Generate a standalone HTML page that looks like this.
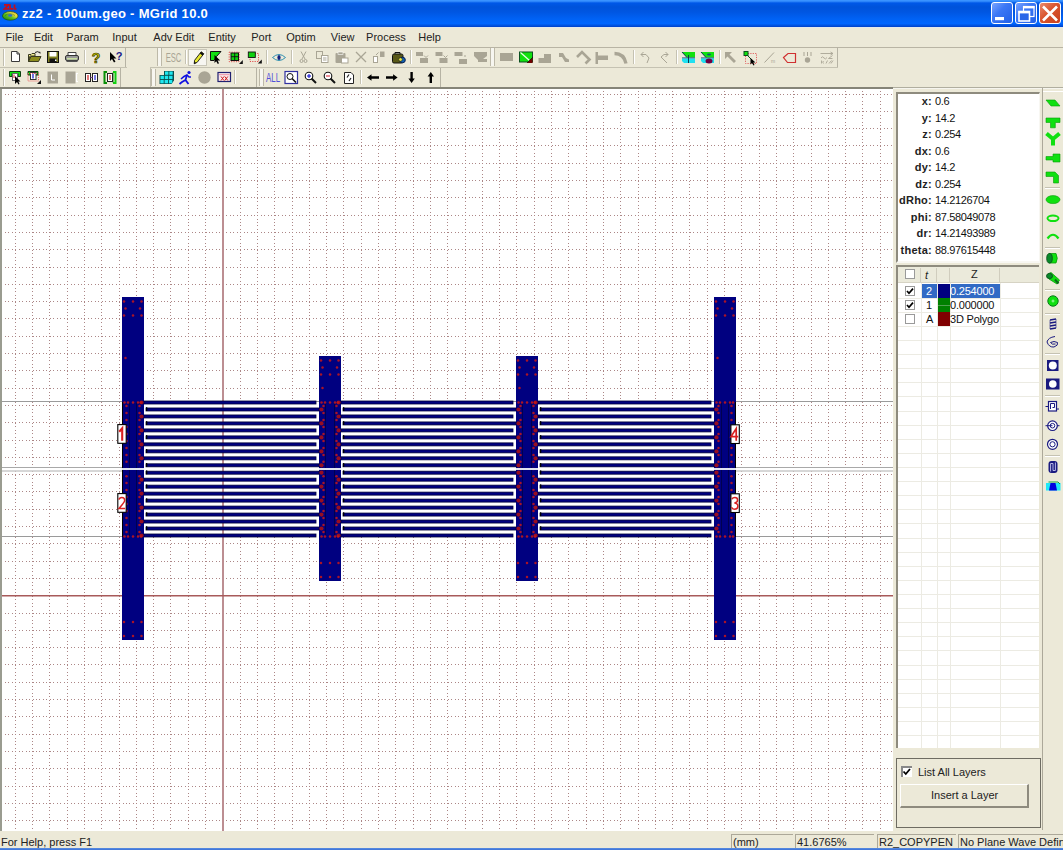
<!DOCTYPE html>
<html><head><meta charset="utf-8"><style>
html,body{margin:0;padding:0}
body{width:1063px;height:850px;overflow:hidden;position:relative;background:#ECE9D8;font-family:"Liberation Sans", sans-serif;font-size:11px;color:#222}
.a{position:absolute}
.t{position:absolute;white-space:nowrap;line-height:1}
</style></head><body>

<div class="a" style="left:0;top:0;width:1063px;height:27px;background:linear-gradient(to bottom,#3A93FF 0px,#3A93FF 1px,#0058E8 3px,#0053DA 7px,#0056E2 12px,#0062F5 19px,#0066FF 23.5px,#0058E8 25px,#0040C8 27px)"></div>
<div class="a" style="left:0;top:27px;width:1063px;height:1px;background:#E4E9EC"></div>
<div class="t" style="left:22px;top:6.7px;font-size:13px;font-weight:bold;color:#fff;letter-spacing:0.3px">zz2 - 100um.geo - MGrid 10.0</div>

<svg class="a" style="left:0;top:0" width="22" height="26" viewBox="0 0 22 26">
<defs><linearGradient id="lg1" x1="0" y1="1" x2="1" y2="0"><stop offset="0" stop-color="#0a7a10"/><stop offset="0.45" stop-color="#60c020"/><stop offset="0.7" stop-color="#e8e040"/><stop offset="1" stop-color="#e0a020"/></linearGradient></defs>
<path d="M4 4.8H8.5L4.5 8.8H8.8M10 4.5V8.8H13M14.5 4.5V8.8H16.5" stroke="#C01020" stroke-width="1.8" fill="none"/>
<ellipse cx="10.2" cy="15.9" rx="7.8" ry="4.3" fill="url(#lg1)" stroke="#104010" stroke-width="0.6"/>
<ellipse cx="10.2" cy="15.5" rx="2.2" ry="1.2" fill="#3070C8"/>
<path d="M5 15.5Q10 12 15 15.5" stroke="#204020" stroke-width="0.7" fill="none" stroke-opacity="0.6"/>
</svg>
<div class="a" style="left:991px;top:2px;width:19.5px;height:19.5px;border:1px solid #fff;border-radius:3px;background:linear-gradient(135deg,#7AA4FF 0%,#3C78F5 40%,#2160E8 100%)"></div>
<div class="a" style="left:1015px;top:2px;width:19.5px;height:19.5px;border:1px solid #fff;border-radius:3px;background:linear-gradient(135deg,#7AA4FF 0%,#3C78F5 40%,#2160E8 100%)"></div>
<div class="a" style="left:1039px;top:2px;width:19.5px;height:19.5px;border:1px solid #fff;border-radius:3px;background:linear-gradient(135deg,#E88A6E 0%,#D9552E 45%,#C8401E 100%)"></div>
<svg class="a" style="left:991px;top:2px" width="70" height="22">
<rect x="4" y="15" width="9" height="3.2" fill="#fff"/>
<rect x="32.5" y="4.5" width="10.5" height="10" fill="none" stroke="#fff" stroke-width="1.2"/>
<rect x="32" y="4" width="11.5" height="2.4" fill="#fff"/>
<rect x="28" y="9.5" width="10.5" height="9.5" fill="#2a66e8" stroke="#fff" stroke-width="1.6"/>
<rect x="27.5" y="9" width="11.5" height="2.4" fill="#fff"/>
<path d="M52 4.5L66 18.5M66 4.5L52 18.5" stroke="#fff" stroke-width="2.6"/>
</svg>
<div class="t" style="left:5.6px;top:32px">File</div>
<div class="t" style="left:33.9px;top:32px">Edit</div>
<div class="t" style="left:66.3px;top:32px">Param</div>
<div class="t" style="left:112.3px;top:32px">Input</div>
<div class="t" style="left:153.3px;top:32px">Adv Edit</div>
<div class="t" style="left:208.3px;top:32px">Entity</div>
<div class="t" style="left:251.2px;top:32px">Port</div>
<div class="t" style="left:286.3px;top:32px">Optim</div>
<div class="t" style="left:330.8px;top:32px">View</div>
<div class="t" style="left:366.1px;top:32px">Process</div>
<div class="t" style="left:418.3px;top:32px">Help</div>
<div class="a" style="left:0;top:47px;width:1063px;height:1px;background:#B8B4A4"></div>
<div class="a" style="left:0;top:67px;width:127px;height:1px;background:#C5C2B2"></div>
<div class="a" style="left:150px;top:67px;width:688px;height:1px;background:#C5C2B2"></div>
<div class="a" style="left:893px;top:87px;width:170px;height:1px;background:#B0AE9F"></div>
<div class="a" style="left:893px;top:88px;width:170px;height:1px;background:#F6F5EE"></div>
<svg class="a" style="left:0;top:46px" width="1063" height="42" viewBox="0 46 1063 42">
<rect x="3" y="49" width="1" height="17" fill="#C0BDAE"/><rect x="4" y="49" width="1" height="17" fill="#fff"/>
<rect x="84" y="50" width="1" height="14" fill="#C5C2B2"/><rect x="85" y="50" width="1" height="14" fill="#fff"/>
<rect x="125" y="47" width="1" height="20" fill="#B6B3A4"/>
<rect x="3" y="69" width="1" height="17" fill="#C0BDAE"/><rect x="4" y="69" width="1" height="17" fill="#fff"/>
<rect x="120" y="68" width="1" height="19" fill="#B6B3A4"/>
<rect x="157" y="48" width="1" height="18" fill="#BDB9A8"/><rect x="158" y="48" width="3" height="18" fill="#F7F6F0"/><rect x="161" y="48" width="1" height="18" fill="#BDB9A8"/>
<rect x="185" y="50" width="1" height="14" fill="#C5C2B2"/><rect x="186" y="50" width="1" height="14" fill="#fff"/>
<rect x="266" y="50" width="1" height="14" fill="#C5C2B2"/><rect x="267" y="50" width="1" height="14" fill="#fff"/>
<rect x="291" y="50" width="1" height="14" fill="#C5C2B2"/><rect x="292" y="50" width="1" height="14" fill="#fff"/>
<rect x="410" y="50" width="1" height="14" fill="#C5C2B2"/><rect x="411" y="50" width="1" height="14" fill="#fff"/>
<rect x="490" y="48" width="1" height="18" fill="#BDB9A8"/><rect x="491" y="48" width="3" height="18" fill="#F7F6F0"/><rect x="494" y="48" width="1" height="18" fill="#BDB9A8"/>
<rect x="633" y="50" width="1" height="14" fill="#C5C2B2"/><rect x="634" y="50" width="1" height="14" fill="#fff"/>
<rect x="676" y="50" width="1" height="14" fill="#C5C2B2"/><rect x="677" y="50" width="1" height="14" fill="#fff"/>
<rect x="719" y="50" width="1" height="14" fill="#C5C2B2"/><rect x="720" y="50" width="1" height="14" fill="#fff"/>
<rect x="837" y="47" width="1" height="20" fill="#B6B3A4"/>
<rect x="150" y="68" width="1" height="19" fill="#C0BDAE"/>
<rect x="151" y="69" width="1" height="17" fill="#BDB9A8"/><rect x="152" y="69" width="3" height="17" fill="#F7F6F0"/><rect x="155" y="69" width="1" height="17" fill="#BDB9A8"/>
<rect x="234" y="70" width="1" height="14" fill="#C5C2B2"/><rect x="235" y="70" width="1" height="14" fill="#fff"/>
<rect x="256" y="68" width="1" height="19" fill="#B6B3A4"/>
<rect x="259" y="69" width="1" height="17" fill="#BDB9A8"/><rect x="260" y="69" width="3" height="17" fill="#F7F6F0"/><rect x="263" y="69" width="1" height="17" fill="#BDB9A8"/>
<rect x="360" y="70" width="1" height="14" fill="#C5C2B2"/><rect x="361" y="70" width="1" height="14" fill="#fff"/>
<rect x="440" y="68" width="1" height="19" fill="#B6B3A4"/>
<path d="M11.5 51.5H17L19.5 54V61.5H11.5Z" fill="#fff" stroke="#3a3a3a"/><path d="M17 51.5V54H19.5" fill="none" stroke="#3a3a3a"/>
<path d="M28.5 54.5H31L32 53.5H35V56H30L28.5 61.5Z" fill="#F2EE90" stroke="#3a3a20"/>
<path d="M28.5 61.5L31 56.5H41L38.5 61.5Z" fill="#8C8C1C" stroke="#3a3a20"/>
<path d="M35 52.5Q38 50.5 40 53" fill="none" stroke="#222" stroke-width="1"/><path d="M39 52L41 54L40 51.5Z" fill="#222"/>
<rect x="47.5" y="51.5" width="11" height="11" fill="#808020" stroke="#111"/><rect x="49.5" y="52" width="7" height="4.5" fill="#fff"/><rect x="49.5" y="58.5" width="7" height="4" fill="#111"/><rect x="55" y="59.5" width="1.5" height="1.5" fill="#fff"/>
<path d="M68 52.5H76V55.5H68Z" fill="#fff" stroke="#444"/><rect x="65.5" y="55.5" width="13" height="5" rx="1.5" fill="#9a9a9a" stroke="#333"/><rect x="67" y="58" width="10" height="1.5" fill="#c8e0a0"/><rect x="66.5" y="60.5" width="11" height="1.5" fill="#555"/>
<text x="96" y="62.5" font-family="Liberation Sans" font-weight="bold" font-size="14" fill="#C8C800" stroke="#303000" stroke-width="0.7" text-anchor="middle">?</text>
<path d="M110 52V61L112 59L114 62.5L115.5 61.5L113.5 58.5H116.5Z" fill="#000"/>
<text x="119" y="60" font-family="Liberation Sans" font-weight="bold" font-size="11" fill="#1a1a8a" text-anchor="middle">?</text>
<text x="0" y="61.8" font-family="Liberation Sans" font-size="12.3" fill="#A9A595" text-anchor="middle" transform="translate(173.5 0) scale(0.62 1)">ESC</text>
<rect x="188.5" y="49.5" width="18" height="16" fill="#F7F6F1" stroke="#C9C6B8"/>
<path d="M194.2 63.8L194.6 60.3L201.2 51.8L203.8 53.8L197.2 62.3Z" fill="#E8E830" stroke="#111" stroke-width="0.9"/><path d="M201.2 51.8L203.8 53.8L202.4 55.6L199.8 53.6Z" fill="#111"/><path d="M194.2 63.8L194.5 61.6L196.2 62.9Z" fill="#111"/>
<path d="M210.5 51.5H221L216.5 56.5L214 60.5H210.5Z" fill="#10E010" stroke="#111"/>
<path d="M214.5 55V63L216.2 61.3L217.8 64L219 63.3L217.6 60.6H220.2Z" fill="#000"/>
<rect x="229.2" y="52.2" width="10" height="9.5" fill="none" stroke="#E04040" stroke-dasharray="1.2 1.2" stroke-width="0.9"/>
<rect x="231" y="53" width="7.5" height="7.5" fill="#10D010" stroke="#111" stroke-width="1"/><path d="M234.7 53V60.5M231 56.7H238.5" stroke="#111" stroke-width="0.9"/>
<path d="M239 64H242.8V60Z" fill="#111"/>
<rect x="250" y="53.5" width="8.5" height="8" fill="none" stroke="#E04040" stroke-dasharray="1.2 1.2" stroke-width="0.9"/>
<rect x="248.3" y="52" width="7" height="5.5" fill="#10D010" stroke="#111" stroke-width="0.9"/>
<path d="M257.8 63.6H261.8V59.6Z" fill="#111"/>
<path d="M272.5 57.5Q279 51.5 285.5 57.5Q279 63.5 272.5 57.5Z" fill="none" stroke="#3090B0" stroke-width="1"/><ellipse cx="279" cy="57.5" rx="1.6" ry="2.6" fill="#102080"/>
<path d="M301 51.5L305 59M306 51.5L302 59" stroke="#A9A595" stroke-width="1" fill="none"/><circle cx="301.5" cy="61" r="1.5" fill="none" stroke="#A9A595"/><circle cx="305.5" cy="61" r="1.5" fill="none" stroke="#A9A595"/>
<rect x="316.5" y="51.5" width="6" height="7" fill="none" stroke="#A9A595"/><rect x="321.5" y="55.5" width="6.5" height="7" fill="#FFFFFF" stroke="#A9A595"/><path d="M323 58H326.5M323 60H326.5" stroke="#A9A595"/>
<rect x="335.5" y="53" width="10" height="10" rx="1" fill="#A9A595"/><rect x="338" y="52" width="5" height="2.5" fill="#A9A595" stroke="#fff" stroke-width="0.6"/><rect x="341.5" y="58" width="6.5" height="5" fill="#fff" stroke="#A9A595"/>
<path d="M356 52L366 62M366 52L356 62" stroke="#A9A595" stroke-width="1.3"/>
<rect x="373.5" y="56.5" width="4" height="6" fill="#fff" stroke="#A9A595"/><rect x="380" y="51.5" width="4.5" height="5.5" fill="#A9A595"/><path d="M376 55L378.5 52.5" stroke="#A9A595"/>
<rect x="392.5" y="54" width="10.5" height="9" rx="1.5" fill="#585818" stroke="#111"/><path d="M395 54V52.5H400V54" fill="none" stroke="#111"/><circle cx="402.5" cy="60" r="2.8" fill="#1060B0" stroke="#0a2050"/><circle cx="400.5" cy="59.5" r="1.8" fill="#E8E840" stroke="#222" stroke-width="0.6"/>
<rect x="416" y="52" width="7" height="4" fill="#A9A595"/><rect x="420" y="58" width="8" height="5" fill="#A9A595"/><path d="M424 55.5L426 57.5L428 55.5" stroke="#A9A595" fill="none"/>
<rect x="435.5" y="52" width="7" height="4" fill="#A9A595"/><rect x="439.5" y="58" width="8" height="5" fill="#A9A595"/><path d="M443.5 55.5L445.5 57.5L447.5 55.5" stroke="#A9A595" fill="none"/>
<rect x="454.5" y="52" width="8" height="4" fill="#A9A595"/><rect x="459" y="59" width="8" height="5" fill="#A9A595"/><path d="M465 55V57" stroke="#A9A595"/>
<path d="M474 52H487V56L483 59H487V62H478V60L474 56Z" fill="#A9A595"/>
<rect x="500" y="53" width="13" height="8" fill="#A9A595"/>
<rect x="519.5" y="52" width="13" height="10" fill="#10E010" stroke="#0a5020"/><path d="M520.5 52.5L530 61" stroke="#E8FFE8" stroke-width="1.2"/><path d="M528 62L532.5 57.5V63H527Z" fill="#700000"/><path d="M527 63L533 57" stroke="#111" stroke-width="0.8"/>
<path d="M538.5 58H544V54H551V63H538.5Z" fill="#A9A595"/>
<path d="M559 53H563L566 58L569 59.5V62H565L562 57H559Z" fill="#A9A595"/>
<path d="M577 57L582 52L589.5 59.5L585.5 63.5" stroke="#A9A595" stroke-width="2.6" fill="none"/>
<rect x="595.5" y="52" width="2.5" height="12" fill="#A9A595"/><rect x="598" y="55.5" width="10" height="4.5" fill="#A9A595"/>
<path d="M614.5 53.5Q624 53.5 626 63.5" stroke="#A9A595" stroke-width="3.3" fill="none"/>
<path d="M647 63L649 58L646 54.5H641" stroke="#A9A595" fill="none"/><path d="M641 54.5L643.5 52M641 54.5L643.5 57" stroke="#A9A595" fill="none"/>
<path d="M667 63L661 57L664 54.5H668" stroke="#A9A595" fill="none"/><path d="M668 54.5L665.5 52M668 54.5L665.5 57" stroke="#A9A595" fill="none"/>
<path d="M682 52H695V57.5H687Z" fill="#10E010"/><path d="M682 52L687 57.5" stroke="#0a3a50"/><rect x="682" y="57.5" width="13" height="1" fill="#0a3a70"/><path d="M682 58.5H695V63H684L682 61Z" fill="#20E0F0"/>
<path d="M701 52H714V57.5H706Z" fill="#10E010"/><path d="M701 52L706 57.5" stroke="#0a3a50"/><rect x="701" y="57.5" width="13" height="1" fill="#0a3a70"/><path d="M701 58.5H714V63H703L701 61Z" fill="#20E0F0"/>
<rect x="688" y="55" width="1" height="8" fill="#0a3a50"/>
<ellipse cx="709" cy="61" rx="3.5" ry="2.5" fill="#700040"/><ellipse cx="709" cy="54.5" rx="2" ry="1" fill="#0a5a70"/>
<path d="M725 52H732L729.5 54.5L736 61L734 63L727.5 56.5L725 59Z" fill="#A9A595"/>
<rect x="745.5" y="53.5" width="11" height="10" fill="none" stroke="#E06060" stroke-dasharray="1.2 1.2"/><rect x="744" y="51.5" width="4" height="4" fill="#10E010" stroke="#0a5020"/><path d="M747 55L752 60" stroke="#0a5020"/><path d="M750.5 58V64.5L752 63L753.5 65.5L754.5 65L753.3 62.5H755.5Z" fill="#000"/>
<path d="M764.5 62.5L774 52.5" stroke="#A9A595" fill="none"/><text x="771" y="63" font-family="Liberation Sans" font-size="5" fill="#A9A595">m</text>
<path d="M783.5 57.5L788 53.5H795.5V62.5H787.5Z" fill="none" stroke="#D03030" stroke-width="1.2"/>
<path d="M804 52V56M807.5 52V56M811 52V56" stroke="#A9A595"/><circle cx="807.5" cy="60" r="2.7" fill="#A9A595"/>
<path d="M820.5 53.5H833M830.5 52L833 53.5L830.5 55M821 58Q822.5 55.5 824 58Q825.5 60 827 57.5M828.5 58.5L832.5 55.5M828.5 58.5H832.5M821.5 63.5V60.5M823.5 63.5Q822 62 823.5 61M826 63.5L827.5 60.5M829 63.5L831.5 60.5M831 63.5L833 60.5" stroke="#A9A595" stroke-width="0.9" fill="none"/>
<path d="M9.5 76.5V71.5H20.5V76.5H18V73.5H12V76.5Z" fill="#10E010" stroke="#0a4010"/><rect x="12.5" y="73.5" width="5" height="7" fill="#fff" stroke="#666"/><path d="M14 74.5V78" stroke="#D02020"/>
<path d="M15 76V84L17 82L18.5 84.5L19.5 84L18.3 81.5H20.5Z" fill="#000"/>
<path d="M28 75V71.5H38V75Z" fill="#10C010" stroke="#0a4010"/><rect x="30.5" y="72.5" width="5.5" height="7" fill="#fff" stroke="#333"/><path d="M33 73.5V78.5" stroke="#2020D0" stroke-width="1.3"/><rect x="28" y="73.5" width="10.5" height="7.5" fill="none" stroke="#F06060" stroke-dasharray="1 1"/><path d="M37 84H41V80Z" fill="#111"/>
<rect x="47.5" y="71.5" width="10.5" height="12" fill="#A9A595"/><path d="M51.5 74.5V80H55" stroke="#fff" fill="none"/>
<rect x="65.5" y="71.5" width="10" height="12" fill="#A9A595"/><path d="M78 73.5H76.5V81.5H78" stroke="#fff" fill="none" stroke-width="1.2"/>
<rect x="85.5" y="73.5" width="5" height="8" fill="#fff" stroke="#222"/><rect x="92.5" y="73.5" width="5" height="8" fill="#fff" stroke="#222"/><path d="M88 75V80" stroke="#D02020" stroke-width="1.2"/><path d="M95 75V80" stroke="#2020D0" stroke-width="1.2"/><path d="M90.5 77.5H92.5" stroke="#8040A0"/>
<path d="M107 72H104.5V83H107" stroke="#089008" stroke-width="2" fill="none"/><path d="M113 72H115.5V83H113" stroke="#10D010" stroke-width="2" fill="none"/><path d="M113 72.5V82.5" stroke="#089008"/><rect x="107.5" y="73.5" width="5" height="8" fill="#fff" stroke="#222"/><path d="M110 75V80" stroke="#D02020" stroke-width="1.2"/>
<path d="M164 71H174V80.5L171.5 84H159.5V75H164Z" fill="#0A5050"/>
<rect x="165" y="71.5" width="3.4" height="3.3" fill="#20E8F0"/>
<rect x="169.3" y="71.5" width="3.4" height="3.3" fill="#20E8F0"/>
<rect x="160.5" y="75.8" width="3.4" height="3.3" fill="#20E8F0"/>
<rect x="164.8" y="75.8" width="3.4" height="3.3" fill="#20E8F0"/>
<rect x="169.1" y="75.8" width="3.4" height="3.3" fill="#20E8F0"/>
<rect x="160.3" y="80" width="3.4" height="3.3" fill="#20E8F0"/>
<rect x="164.6" y="80" width="3.4" height="3.3" fill="#20E8F0"/>
<rect x="168.9" y="80" width="3.4" height="3.3" fill="#20E8F0"/>
<circle cx="189" cy="72.5" r="1.6" fill="#1010E0"/><path d="M181 79L184 76.5L187 75L189 77L191 77" stroke="#1010E0" stroke-width="1.6" fill="none"/><path d="M187 75L185.5 80L188.5 84M185.5 80L182 82L179.5 84" stroke="#1010E0" stroke-width="1.8" fill="none"/>
<circle cx="204.5" cy="77.5" r="6.2" fill="#A9A595"/>
<rect x="218" y="72.5" width="12.5" height="9" fill="#F8E8EC" stroke="#202070" stroke-width="1.2"/><rect x="219" y="74" width="10.5" height="1.2" fill="#F0A0B0"/><path d="M221 76.5L224 80.5M224 76.5L221 80.5M224.8 76.5L227.8 80.5M227.8 76.5L224.8 80.5" stroke="#D02020" stroke-width="1"/>
<text x="0" y="81.8" font-family="Liberation Sans" font-size="12" fill="#5050D8" transform="translate(266 0) scale(0.66 1)">ALL</text>
<rect x="285" y="71.5" width="12.5" height="12" fill="#fff" stroke="#3030A0" stroke-width="1.2"/><circle cx="290" cy="76.5" r="3" fill="#fff" stroke="#111"/><path d="M292 78.5L296 82.5" stroke="#111" stroke-width="1.6"/>
<circle cx="309.0" cy="76" r="3.8" fill="#fff" stroke="#111" stroke-width="1.1"/><path d="M311.5 78.5L316.0 83" stroke="#111" stroke-width="2"/><path d="M307.0 76H311.0" stroke="#2020D0" stroke-width="1.2"/>
<path d="M309.0 74V78" stroke="#2020D0" stroke-width="1.2"/>
<circle cx="328.0" cy="76" r="3.8" fill="#fff" stroke="#111" stroke-width="1.1"/><path d="M330.5 78.5L335.0 83" stroke="#111" stroke-width="2"/><path d="M326.0 76H330.0" stroke="#E04050" stroke-width="1.2"/>
<path d="M344.5 72.5H351L353.5 75V83.5H344.5Z" fill="#fff" stroke="#222"/><path d="M347 77.5L349 74.5M349 81L351 78" stroke="#222" stroke-width="1.2"/>
<path d="M367 77.5L371.5 74.3V76.3H379V78.7H371.5V80.7Z" fill="#000"/>
<path d="M397.6 77.5L393.1 74.3V76.3H386V78.7H393.1V80.7Z" fill="#000"/>
<path d="M411.6 83L408.4 78.5H410.4V72H412.8V78.5H414.8Z" fill="#000"/>
<path d="M430.8 72L427.6 76.5H429.6V83H432V76.5H434Z" fill="#000"/>
</svg>
<svg style="position:absolute;left:0px;top:88px" width="893" height="743" viewBox="0 88 893 743">
<rect x="0" y="88" width="893" height="743" fill="#fff"/>
<path d="M15.25 87.08V831M32.55 87.08V831M49.85 87.08V831M67.15 87.08V831M84.45 87.08V831M101.75 87.08V831M119.05 87.08V831M136.35 87.08V831M153.65 87.08V831M170.95 87.08V831M188.25 87.08V831M205.55 87.08V831M222.85 87.08V831M240.15 87.08V831M257.45 87.08V831M274.75 87.08V831M292.05 87.08V831M309.35 87.08V831M326.65 87.08V831M343.95 87.08V831M361.25 87.08V831M378.55 87.08V831M395.85 87.08V831M413.15 87.08V831M430.45 87.08V831M447.75 87.08V831M465.05 87.08V831M482.35 87.08V831M499.65 87.08V831M516.95 87.08V831M534.25 87.08V831M551.55 87.08V831M568.85 87.08V831M586.15 87.08V831M603.45 87.08V831M620.75 87.08V831M638.05 87.08V831M655.35 87.08V831M672.65 87.08V831M689.95 87.08V831M707.25 87.08V831M724.55 87.08V831M741.85 87.08V831M759.15 87.08V831M776.45 87.08V831M793.75 87.08V831M811.05 87.08V831M828.35 87.08V831M845.65 87.08V831M862.95 87.08V831M880.25 87.08V831" stroke="#AC8686" stroke-width="1" stroke-dasharray="1 2.460" fill="none" shape-rendering="crispEdges"/>
<path d="M1.41 94.00H893M1.41 111.30H893M1.41 128.60H893M1.41 145.90H893M1.41 163.20H893M1.41 180.50H893M1.41 197.80H893M1.41 215.10H893M1.41 232.40H893M1.41 249.70H893M1.41 267.00H893M1.41 284.30H893M1.41 301.60H893M1.41 318.90H893M1.41 336.20H893M1.41 353.50H893M1.41 370.80H893M1.41 388.10H893M1.41 405.40H893M1.41 422.70H893M1.41 440.00H893M1.41 457.30H893M1.41 474.60H893M1.41 491.90H893M1.41 509.20H893M1.41 526.50H893M1.41 543.80H893M1.41 561.10H893M1.41 578.40H893M1.41 595.70H893M1.41 613.00H893M1.41 630.30H893M1.41 647.60H893M1.41 664.90H893M1.41 682.20H893M1.41 699.50H893M1.41 716.80H893M1.41 734.10H893M1.41 751.40H893M1.41 768.70H893M1.41 786.00H893M1.41 803.30H893M1.41 820.60H893" stroke="#AC8686" stroke-width="1" stroke-dasharray="1 2.460" fill="none" shape-rendering="crispEdges"/>
</svg>
<svg style="position:absolute;left:0;top:88px" width="893" height="743" viewBox="0 88 893 743">
<rect x="0" y="401" width="893" height="1" fill="#9a9a9a"/>
<rect x="0" y="536" width="893" height="1" fill="#9a9a9a"/>
<rect x="144" y="402" width="570" height="135" fill="#fff"/>
<rect x="222" y="88" width="2" height="743" fill="#BC8E92"/>
<rect x="0" y="595" width="893" height="1.5" fill="#A85A5A"/>
<rect x="122" y="297" width="22" height="343" fill="#000080"/>
<rect x="319" y="356" width="22" height="225" fill="#000080"/>
<rect x="516" y="356" width="22" height="225" fill="#000080"/>
<rect x="714" y="297" width="22" height="343" fill="#000080"/>
<rect x="122" y="402" width="1" height="135" fill="#000"/>
<rect x="129" y="402" width="1" height="135" fill="#000050"/>
<rect x="136" y="402" width="1" height="135" fill="#000050"/>
<rect x="735" y="402" width="1" height="135" fill="#000"/>
<rect x="728" y="402" width="1" height="135" fill="#000050"/>
<rect x="721" y="402" width="1" height="135" fill="#000050"/>
<rect x="325" y="402" width="1" height="135" fill="#000050"/>
<rect x="334" y="402" width="1" height="135" fill="#000050"/>
<rect x="522" y="402" width="1" height="135" fill="#000050"/>
<rect x="531" y="402" width="1" height="135" fill="#000050"/>
<rect x="144" y="401.00" width="172" height="3.0" fill="#000080" stroke="#000038" stroke-width="0.8"/>
<rect x="341" y="401.00" width="172" height="3.0" fill="#000080" stroke="#000038" stroke-width="0.8"/>
<rect x="538" y="401.00" width="173" height="3.0" fill="#000080" stroke="#000038" stroke-width="0.8"/>
<rect x="146" y="407.98" width="173" height="3.0" fill="#000080" stroke="#000038" stroke-width="0.8"/>
<rect x="146" y="407.18" width="1.3" height="3.8" fill="#000"/>
<rect x="343" y="407.98" width="173" height="3.0" fill="#000080" stroke="#000038" stroke-width="0.8"/>
<rect x="343" y="407.18" width="1.3" height="3.8" fill="#000"/>
<rect x="540" y="407.98" width="174" height="3.0" fill="#000080" stroke="#000038" stroke-width="0.8"/>
<rect x="540" y="407.18" width="1.3" height="3.8" fill="#000"/>
<rect x="144" y="414.96" width="172" height="3.0" fill="#000080" stroke="#000038" stroke-width="0.8"/>
<rect x="341" y="414.96" width="172" height="3.0" fill="#000080" stroke="#000038" stroke-width="0.8"/>
<rect x="538" y="414.96" width="173" height="3.0" fill="#000080" stroke="#000038" stroke-width="0.8"/>
<rect x="146" y="421.94" width="173" height="3.0" fill="#000080" stroke="#000038" stroke-width="0.8"/>
<rect x="146" y="421.14" width="1.3" height="3.8" fill="#000"/>
<rect x="343" y="421.94" width="173" height="3.0" fill="#000080" stroke="#000038" stroke-width="0.8"/>
<rect x="343" y="421.14" width="1.3" height="3.8" fill="#000"/>
<rect x="540" y="421.94" width="174" height="3.0" fill="#000080" stroke="#000038" stroke-width="0.8"/>
<rect x="540" y="421.14" width="1.3" height="3.8" fill="#000"/>
<rect x="144" y="428.92" width="172" height="3.0" fill="#000080" stroke="#000038" stroke-width="0.8"/>
<rect x="341" y="428.92" width="172" height="3.0" fill="#000080" stroke="#000038" stroke-width="0.8"/>
<rect x="538" y="428.92" width="173" height="3.0" fill="#000080" stroke="#000038" stroke-width="0.8"/>
<rect x="146" y="435.90" width="173" height="3.0" fill="#000080" stroke="#000038" stroke-width="0.8"/>
<rect x="146" y="435.10" width="1.3" height="3.8" fill="#000"/>
<rect x="343" y="435.90" width="173" height="3.0" fill="#000080" stroke="#000038" stroke-width="0.8"/>
<rect x="343" y="435.10" width="1.3" height="3.8" fill="#000"/>
<rect x="540" y="435.90" width="174" height="3.0" fill="#000080" stroke="#000038" stroke-width="0.8"/>
<rect x="540" y="435.10" width="1.3" height="3.8" fill="#000"/>
<rect x="144" y="442.88" width="172" height="3.0" fill="#000080" stroke="#000038" stroke-width="0.8"/>
<rect x="341" y="442.88" width="172" height="3.0" fill="#000080" stroke="#000038" stroke-width="0.8"/>
<rect x="538" y="442.88" width="173" height="3.0" fill="#000080" stroke="#000038" stroke-width="0.8"/>
<rect x="146" y="449.86" width="173" height="3.0" fill="#000080" stroke="#000038" stroke-width="0.8"/>
<rect x="146" y="449.06" width="1.3" height="3.8" fill="#000"/>
<rect x="343" y="449.86" width="173" height="3.0" fill="#000080" stroke="#000038" stroke-width="0.8"/>
<rect x="343" y="449.06" width="1.3" height="3.8" fill="#000"/>
<rect x="540" y="449.86" width="174" height="3.0" fill="#000080" stroke="#000038" stroke-width="0.8"/>
<rect x="540" y="449.06" width="1.3" height="3.8" fill="#000"/>
<rect x="144" y="456.84" width="172" height="3.0" fill="#000080" stroke="#000038" stroke-width="0.8"/>
<rect x="341" y="456.84" width="172" height="3.0" fill="#000080" stroke="#000038" stroke-width="0.8"/>
<rect x="538" y="456.84" width="173" height="3.0" fill="#000080" stroke="#000038" stroke-width="0.8"/>
<rect x="146" y="463.82" width="173" height="3.0" fill="#000080" stroke="#000038" stroke-width="0.8"/>
<rect x="146" y="463.02" width="1.3" height="3.8" fill="#000"/>
<rect x="343" y="463.82" width="173" height="3.0" fill="#000080" stroke="#000038" stroke-width="0.8"/>
<rect x="343" y="463.02" width="1.3" height="3.8" fill="#000"/>
<rect x="540" y="463.82" width="174" height="3.0" fill="#000080" stroke="#000038" stroke-width="0.8"/>
<rect x="540" y="463.02" width="1.3" height="3.8" fill="#000"/>
<rect x="146" y="471.18" width="173" height="3.0" fill="#000080" stroke="#000038" stroke-width="0.8"/>
<rect x="146" y="470.38" width="1.3" height="3.8" fill="#000"/>
<rect x="343" y="471.18" width="173" height="3.0" fill="#000080" stroke="#000038" stroke-width="0.8"/>
<rect x="343" y="470.38" width="1.3" height="3.8" fill="#000"/>
<rect x="540" y="471.18" width="174" height="3.0" fill="#000080" stroke="#000038" stroke-width="0.8"/>
<rect x="540" y="470.38" width="1.3" height="3.8" fill="#000"/>
<rect x="144" y="478.16" width="172" height="3.0" fill="#000080" stroke="#000038" stroke-width="0.8"/>
<rect x="341" y="478.16" width="172" height="3.0" fill="#000080" stroke="#000038" stroke-width="0.8"/>
<rect x="538" y="478.16" width="173" height="3.0" fill="#000080" stroke="#000038" stroke-width="0.8"/>
<rect x="146" y="485.14" width="173" height="3.0" fill="#000080" stroke="#000038" stroke-width="0.8"/>
<rect x="146" y="484.34" width="1.3" height="3.8" fill="#000"/>
<rect x="343" y="485.14" width="173" height="3.0" fill="#000080" stroke="#000038" stroke-width="0.8"/>
<rect x="343" y="484.34" width="1.3" height="3.8" fill="#000"/>
<rect x="540" y="485.14" width="174" height="3.0" fill="#000080" stroke="#000038" stroke-width="0.8"/>
<rect x="540" y="484.34" width="1.3" height="3.8" fill="#000"/>
<rect x="144" y="492.12" width="172" height="3.0" fill="#000080" stroke="#000038" stroke-width="0.8"/>
<rect x="341" y="492.12" width="172" height="3.0" fill="#000080" stroke="#000038" stroke-width="0.8"/>
<rect x="538" y="492.12" width="173" height="3.0" fill="#000080" stroke="#000038" stroke-width="0.8"/>
<rect x="146" y="499.10" width="173" height="3.0" fill="#000080" stroke="#000038" stroke-width="0.8"/>
<rect x="146" y="498.30" width="1.3" height="3.8" fill="#000"/>
<rect x="343" y="499.10" width="173" height="3.0" fill="#000080" stroke="#000038" stroke-width="0.8"/>
<rect x="343" y="498.30" width="1.3" height="3.8" fill="#000"/>
<rect x="540" y="499.10" width="174" height="3.0" fill="#000080" stroke="#000038" stroke-width="0.8"/>
<rect x="540" y="498.30" width="1.3" height="3.8" fill="#000"/>
<rect x="144" y="506.08" width="172" height="3.0" fill="#000080" stroke="#000038" stroke-width="0.8"/>
<rect x="341" y="506.08" width="172" height="3.0" fill="#000080" stroke="#000038" stroke-width="0.8"/>
<rect x="538" y="506.08" width="173" height="3.0" fill="#000080" stroke="#000038" stroke-width="0.8"/>
<rect x="146" y="513.06" width="173" height="3.0" fill="#000080" stroke="#000038" stroke-width="0.8"/>
<rect x="146" y="512.26" width="1.3" height="3.8" fill="#000"/>
<rect x="343" y="513.06" width="173" height="3.0" fill="#000080" stroke="#000038" stroke-width="0.8"/>
<rect x="343" y="512.26" width="1.3" height="3.8" fill="#000"/>
<rect x="540" y="513.06" width="174" height="3.0" fill="#000080" stroke="#000038" stroke-width="0.8"/>
<rect x="540" y="512.26" width="1.3" height="3.8" fill="#000"/>
<rect x="144" y="520.04" width="172" height="3.0" fill="#000080" stroke="#000038" stroke-width="0.8"/>
<rect x="341" y="520.04" width="172" height="3.0" fill="#000080" stroke="#000038" stroke-width="0.8"/>
<rect x="538" y="520.04" width="173" height="3.0" fill="#000080" stroke="#000038" stroke-width="0.8"/>
<rect x="146" y="527.02" width="173" height="3.0" fill="#000080" stroke="#000038" stroke-width="0.8"/>
<rect x="146" y="526.22" width="1.3" height="3.8" fill="#000"/>
<rect x="343" y="527.02" width="173" height="3.0" fill="#000080" stroke="#000038" stroke-width="0.8"/>
<rect x="343" y="526.22" width="1.3" height="3.8" fill="#000"/>
<rect x="540" y="527.02" width="174" height="3.0" fill="#000080" stroke="#000038" stroke-width="0.8"/>
<rect x="540" y="526.22" width="1.3" height="3.8" fill="#000"/>
<rect x="144" y="534.00" width="172" height="3.0" fill="#000080" stroke="#000038" stroke-width="0.8"/>
<rect x="341" y="534.00" width="172" height="3.0" fill="#000080" stroke="#000038" stroke-width="0.8"/>
<rect x="538" y="534.00" width="173" height="3.0" fill="#000080" stroke="#000038" stroke-width="0.8"/>
<circle cx="141.5" cy="402.5" r="2.1" fill="#B01010" fill-opacity="0.85"/>
<circle cx="338.5" cy="402.5" r="2.1" fill="#B01010" fill-opacity="0.85"/>
<circle cx="535.5" cy="402.5" r="2.1" fill="#B01010" fill-opacity="0.85"/>
<circle cx="321.5" cy="409.5" r="2.1" fill="#B01010" fill-opacity="0.85"/>
<circle cx="518.5" cy="409.5" r="2.1" fill="#B01010" fill-opacity="0.85"/>
<circle cx="716.5" cy="409.5" r="2.1" fill="#B01010" fill-opacity="0.85"/>
<circle cx="141.5" cy="416.5" r="2.1" fill="#B01010" fill-opacity="0.85"/>
<circle cx="338.5" cy="416.5" r="2.1" fill="#B01010" fill-opacity="0.85"/>
<circle cx="535.5" cy="416.5" r="2.1" fill="#B01010" fill-opacity="0.85"/>
<circle cx="321.5" cy="423.4" r="2.1" fill="#B01010" fill-opacity="0.85"/>
<circle cx="518.5" cy="423.4" r="2.1" fill="#B01010" fill-opacity="0.85"/>
<circle cx="716.5" cy="423.4" r="2.1" fill="#B01010" fill-opacity="0.85"/>
<circle cx="141.5" cy="430.4" r="2.1" fill="#B01010" fill-opacity="0.85"/>
<circle cx="338.5" cy="430.4" r="2.1" fill="#B01010" fill-opacity="0.85"/>
<circle cx="535.5" cy="430.4" r="2.1" fill="#B01010" fill-opacity="0.85"/>
<circle cx="321.5" cy="437.4" r="2.1" fill="#B01010" fill-opacity="0.85"/>
<circle cx="518.5" cy="437.4" r="2.1" fill="#B01010" fill-opacity="0.85"/>
<circle cx="716.5" cy="437.4" r="2.1" fill="#B01010" fill-opacity="0.85"/>
<circle cx="141.5" cy="444.4" r="2.1" fill="#B01010" fill-opacity="0.85"/>
<circle cx="338.5" cy="444.4" r="2.1" fill="#B01010" fill-opacity="0.85"/>
<circle cx="535.5" cy="444.4" r="2.1" fill="#B01010" fill-opacity="0.85"/>
<circle cx="321.5" cy="451.4" r="2.1" fill="#B01010" fill-opacity="0.85"/>
<circle cx="518.5" cy="451.4" r="2.1" fill="#B01010" fill-opacity="0.85"/>
<circle cx="716.5" cy="451.4" r="2.1" fill="#B01010" fill-opacity="0.85"/>
<circle cx="141.5" cy="458.3" r="2.1" fill="#B01010" fill-opacity="0.85"/>
<circle cx="338.5" cy="458.3" r="2.1" fill="#B01010" fill-opacity="0.85"/>
<circle cx="535.5" cy="458.3" r="2.1" fill="#B01010" fill-opacity="0.85"/>
<circle cx="321.5" cy="465.3" r="2.1" fill="#B01010" fill-opacity="0.85"/>
<circle cx="518.5" cy="465.3" r="2.1" fill="#B01010" fill-opacity="0.85"/>
<circle cx="716.5" cy="465.3" r="2.1" fill="#B01010" fill-opacity="0.85"/>
<circle cx="321.5" cy="472.7" r="2.1" fill="#B01010" fill-opacity="0.85"/>
<circle cx="518.5" cy="472.7" r="2.1" fill="#B01010" fill-opacity="0.85"/>
<circle cx="716.5" cy="472.7" r="2.1" fill="#B01010" fill-opacity="0.85"/>
<circle cx="141.5" cy="479.7" r="2.1" fill="#B01010" fill-opacity="0.85"/>
<circle cx="338.5" cy="479.7" r="2.1" fill="#B01010" fill-opacity="0.85"/>
<circle cx="535.5" cy="479.7" r="2.1" fill="#B01010" fill-opacity="0.85"/>
<circle cx="321.5" cy="486.6" r="2.1" fill="#B01010" fill-opacity="0.85"/>
<circle cx="518.5" cy="486.6" r="2.1" fill="#B01010" fill-opacity="0.85"/>
<circle cx="716.5" cy="486.6" r="2.1" fill="#B01010" fill-opacity="0.85"/>
<circle cx="141.5" cy="493.6" r="2.1" fill="#B01010" fill-opacity="0.85"/>
<circle cx="338.5" cy="493.6" r="2.1" fill="#B01010" fill-opacity="0.85"/>
<circle cx="535.5" cy="493.6" r="2.1" fill="#B01010" fill-opacity="0.85"/>
<circle cx="321.5" cy="500.6" r="2.1" fill="#B01010" fill-opacity="0.85"/>
<circle cx="518.5" cy="500.6" r="2.1" fill="#B01010" fill-opacity="0.85"/>
<circle cx="716.5" cy="500.6" r="2.1" fill="#B01010" fill-opacity="0.85"/>
<circle cx="141.5" cy="507.6" r="2.1" fill="#B01010" fill-opacity="0.85"/>
<circle cx="338.5" cy="507.6" r="2.1" fill="#B01010" fill-opacity="0.85"/>
<circle cx="535.5" cy="507.6" r="2.1" fill="#B01010" fill-opacity="0.85"/>
<circle cx="321.5" cy="514.6" r="2.1" fill="#B01010" fill-opacity="0.85"/>
<circle cx="518.5" cy="514.6" r="2.1" fill="#B01010" fill-opacity="0.85"/>
<circle cx="716.5" cy="514.6" r="2.1" fill="#B01010" fill-opacity="0.85"/>
<circle cx="141.5" cy="521.5" r="2.1" fill="#B01010" fill-opacity="0.85"/>
<circle cx="338.5" cy="521.5" r="2.1" fill="#B01010" fill-opacity="0.85"/>
<circle cx="535.5" cy="521.5" r="2.1" fill="#B01010" fill-opacity="0.85"/>
<circle cx="321.5" cy="528.5" r="2.1" fill="#B01010" fill-opacity="0.85"/>
<circle cx="518.5" cy="528.5" r="2.1" fill="#B01010" fill-opacity="0.85"/>
<circle cx="716.5" cy="528.5" r="2.1" fill="#B01010" fill-opacity="0.85"/>
<circle cx="141.5" cy="535.5" r="2.1" fill="#B01010" fill-opacity="0.85"/>
<circle cx="338.5" cy="535.5" r="2.1" fill="#B01010" fill-opacity="0.85"/>
<circle cx="535.5" cy="535.5" r="2.1" fill="#B01010" fill-opacity="0.85"/>
<circle cx="139.5" cy="406.0" r="1.25" fill="#C81818" fill-opacity="0.85"/>
<circle cx="126.5" cy="406.0" r="1.25" fill="#C81818" fill-opacity="0.85"/>
<circle cx="336.5" cy="406.0" r="1.25" fill="#C81818" fill-opacity="0.85"/>
<circle cx="323.5" cy="406.0" r="1.25" fill="#C81818" fill-opacity="0.85"/>
<circle cx="533.5" cy="406.0" r="1.25" fill="#C81818" fill-opacity="0.85"/>
<circle cx="520.5" cy="406.0" r="1.25" fill="#C81818" fill-opacity="0.85"/>
<circle cx="731.5" cy="406.0" r="1.25" fill="#C81818" fill-opacity="0.85"/>
<circle cx="718.5" cy="406.0" r="1.25" fill="#C81818" fill-opacity="0.85"/>
<circle cx="139.5" cy="413.0" r="1.25" fill="#C81818" fill-opacity="0.85"/>
<circle cx="126.5" cy="413.0" r="1.25" fill="#C81818" fill-opacity="0.85"/>
<circle cx="336.5" cy="413.0" r="1.25" fill="#C81818" fill-opacity="0.85"/>
<circle cx="323.5" cy="413.0" r="1.25" fill="#C81818" fill-opacity="0.85"/>
<circle cx="533.5" cy="413.0" r="1.25" fill="#C81818" fill-opacity="0.85"/>
<circle cx="520.5" cy="413.0" r="1.25" fill="#C81818" fill-opacity="0.85"/>
<circle cx="731.5" cy="413.0" r="1.25" fill="#C81818" fill-opacity="0.85"/>
<circle cx="718.5" cy="413.0" r="1.25" fill="#C81818" fill-opacity="0.85"/>
<circle cx="139.5" cy="419.9" r="1.25" fill="#C81818" fill-opacity="0.85"/>
<circle cx="126.5" cy="419.9" r="1.25" fill="#C81818" fill-opacity="0.85"/>
<circle cx="336.5" cy="419.9" r="1.25" fill="#C81818" fill-opacity="0.85"/>
<circle cx="323.5" cy="419.9" r="1.25" fill="#C81818" fill-opacity="0.85"/>
<circle cx="533.5" cy="419.9" r="1.25" fill="#C81818" fill-opacity="0.85"/>
<circle cx="520.5" cy="419.9" r="1.25" fill="#C81818" fill-opacity="0.85"/>
<circle cx="731.5" cy="419.9" r="1.25" fill="#C81818" fill-opacity="0.85"/>
<circle cx="718.5" cy="419.9" r="1.25" fill="#C81818" fill-opacity="0.85"/>
<circle cx="139.5" cy="426.9" r="1.25" fill="#C81818" fill-opacity="0.85"/>
<circle cx="126.5" cy="426.9" r="1.25" fill="#C81818" fill-opacity="0.85"/>
<circle cx="336.5" cy="426.9" r="1.25" fill="#C81818" fill-opacity="0.85"/>
<circle cx="323.5" cy="426.9" r="1.25" fill="#C81818" fill-opacity="0.85"/>
<circle cx="533.5" cy="426.9" r="1.25" fill="#C81818" fill-opacity="0.85"/>
<circle cx="520.5" cy="426.9" r="1.25" fill="#C81818" fill-opacity="0.85"/>
<circle cx="731.5" cy="426.9" r="1.25" fill="#C81818" fill-opacity="0.85"/>
<circle cx="718.5" cy="426.9" r="1.25" fill="#C81818" fill-opacity="0.85"/>
<circle cx="139.5" cy="433.9" r="1.25" fill="#C81818" fill-opacity="0.85"/>
<circle cx="126.5" cy="433.9" r="1.25" fill="#C81818" fill-opacity="0.85"/>
<circle cx="336.5" cy="433.9" r="1.25" fill="#C81818" fill-opacity="0.85"/>
<circle cx="323.5" cy="433.9" r="1.25" fill="#C81818" fill-opacity="0.85"/>
<circle cx="533.5" cy="433.9" r="1.25" fill="#C81818" fill-opacity="0.85"/>
<circle cx="520.5" cy="433.9" r="1.25" fill="#C81818" fill-opacity="0.85"/>
<circle cx="731.5" cy="433.9" r="1.25" fill="#C81818" fill-opacity="0.85"/>
<circle cx="718.5" cy="433.9" r="1.25" fill="#C81818" fill-opacity="0.85"/>
<circle cx="139.5" cy="440.9" r="1.25" fill="#C81818" fill-opacity="0.85"/>
<circle cx="126.5" cy="440.9" r="1.25" fill="#C81818" fill-opacity="0.85"/>
<circle cx="336.5" cy="440.9" r="1.25" fill="#C81818" fill-opacity="0.85"/>
<circle cx="323.5" cy="440.9" r="1.25" fill="#C81818" fill-opacity="0.85"/>
<circle cx="533.5" cy="440.9" r="1.25" fill="#C81818" fill-opacity="0.85"/>
<circle cx="520.5" cy="440.9" r="1.25" fill="#C81818" fill-opacity="0.85"/>
<circle cx="731.5" cy="440.9" r="1.25" fill="#C81818" fill-opacity="0.85"/>
<circle cx="718.5" cy="440.9" r="1.25" fill="#C81818" fill-opacity="0.85"/>
<circle cx="139.5" cy="447.9" r="1.25" fill="#C81818" fill-opacity="0.85"/>
<circle cx="126.5" cy="447.9" r="1.25" fill="#C81818" fill-opacity="0.85"/>
<circle cx="336.5" cy="447.9" r="1.25" fill="#C81818" fill-opacity="0.85"/>
<circle cx="323.5" cy="447.9" r="1.25" fill="#C81818" fill-opacity="0.85"/>
<circle cx="533.5" cy="447.9" r="1.25" fill="#C81818" fill-opacity="0.85"/>
<circle cx="520.5" cy="447.9" r="1.25" fill="#C81818" fill-opacity="0.85"/>
<circle cx="731.5" cy="447.9" r="1.25" fill="#C81818" fill-opacity="0.85"/>
<circle cx="718.5" cy="447.9" r="1.25" fill="#C81818" fill-opacity="0.85"/>
<circle cx="139.5" cy="454.9" r="1.25" fill="#C81818" fill-opacity="0.85"/>
<circle cx="126.5" cy="454.9" r="1.25" fill="#C81818" fill-opacity="0.85"/>
<circle cx="336.5" cy="454.9" r="1.25" fill="#C81818" fill-opacity="0.85"/>
<circle cx="323.5" cy="454.9" r="1.25" fill="#C81818" fill-opacity="0.85"/>
<circle cx="533.5" cy="454.9" r="1.25" fill="#C81818" fill-opacity="0.85"/>
<circle cx="520.5" cy="454.9" r="1.25" fill="#C81818" fill-opacity="0.85"/>
<circle cx="731.5" cy="454.9" r="1.25" fill="#C81818" fill-opacity="0.85"/>
<circle cx="718.5" cy="454.9" r="1.25" fill="#C81818" fill-opacity="0.85"/>
<circle cx="139.5" cy="461.8" r="1.25" fill="#C81818" fill-opacity="0.85"/>
<circle cx="126.5" cy="461.8" r="1.25" fill="#C81818" fill-opacity="0.85"/>
<circle cx="336.5" cy="461.8" r="1.25" fill="#C81818" fill-opacity="0.85"/>
<circle cx="323.5" cy="461.8" r="1.25" fill="#C81818" fill-opacity="0.85"/>
<circle cx="533.5" cy="461.8" r="1.25" fill="#C81818" fill-opacity="0.85"/>
<circle cx="520.5" cy="461.8" r="1.25" fill="#C81818" fill-opacity="0.85"/>
<circle cx="731.5" cy="461.8" r="1.25" fill="#C81818" fill-opacity="0.85"/>
<circle cx="718.5" cy="461.8" r="1.25" fill="#C81818" fill-opacity="0.85"/>
<circle cx="139.5" cy="469.0" r="1.25" fill="#C81818" fill-opacity="0.85"/>
<circle cx="126.5" cy="469.0" r="1.25" fill="#C81818" fill-opacity="0.85"/>
<circle cx="336.5" cy="469.0" r="1.25" fill="#C81818" fill-opacity="0.85"/>
<circle cx="323.5" cy="469.0" r="1.25" fill="#C81818" fill-opacity="0.85"/>
<circle cx="533.5" cy="469.0" r="1.25" fill="#C81818" fill-opacity="0.85"/>
<circle cx="520.5" cy="469.0" r="1.25" fill="#C81818" fill-opacity="0.85"/>
<circle cx="731.5" cy="469.0" r="1.25" fill="#C81818" fill-opacity="0.85"/>
<circle cx="718.5" cy="469.0" r="1.25" fill="#C81818" fill-opacity="0.85"/>
<circle cx="139.5" cy="476.2" r="1.25" fill="#C81818" fill-opacity="0.85"/>
<circle cx="126.5" cy="476.2" r="1.25" fill="#C81818" fill-opacity="0.85"/>
<circle cx="336.5" cy="476.2" r="1.25" fill="#C81818" fill-opacity="0.85"/>
<circle cx="323.5" cy="476.2" r="1.25" fill="#C81818" fill-opacity="0.85"/>
<circle cx="533.5" cy="476.2" r="1.25" fill="#C81818" fill-opacity="0.85"/>
<circle cx="520.5" cy="476.2" r="1.25" fill="#C81818" fill-opacity="0.85"/>
<circle cx="731.5" cy="476.2" r="1.25" fill="#C81818" fill-opacity="0.85"/>
<circle cx="718.5" cy="476.2" r="1.25" fill="#C81818" fill-opacity="0.85"/>
<circle cx="139.5" cy="483.1" r="1.25" fill="#C81818" fill-opacity="0.85"/>
<circle cx="126.5" cy="483.1" r="1.25" fill="#C81818" fill-opacity="0.85"/>
<circle cx="336.5" cy="483.1" r="1.25" fill="#C81818" fill-opacity="0.85"/>
<circle cx="323.5" cy="483.1" r="1.25" fill="#C81818" fill-opacity="0.85"/>
<circle cx="533.5" cy="483.1" r="1.25" fill="#C81818" fill-opacity="0.85"/>
<circle cx="520.5" cy="483.1" r="1.25" fill="#C81818" fill-opacity="0.85"/>
<circle cx="731.5" cy="483.1" r="1.25" fill="#C81818" fill-opacity="0.85"/>
<circle cx="718.5" cy="483.1" r="1.25" fill="#C81818" fill-opacity="0.85"/>
<circle cx="139.5" cy="490.1" r="1.25" fill="#C81818" fill-opacity="0.85"/>
<circle cx="126.5" cy="490.1" r="1.25" fill="#C81818" fill-opacity="0.85"/>
<circle cx="336.5" cy="490.1" r="1.25" fill="#C81818" fill-opacity="0.85"/>
<circle cx="323.5" cy="490.1" r="1.25" fill="#C81818" fill-opacity="0.85"/>
<circle cx="533.5" cy="490.1" r="1.25" fill="#C81818" fill-opacity="0.85"/>
<circle cx="520.5" cy="490.1" r="1.25" fill="#C81818" fill-opacity="0.85"/>
<circle cx="731.5" cy="490.1" r="1.25" fill="#C81818" fill-opacity="0.85"/>
<circle cx="718.5" cy="490.1" r="1.25" fill="#C81818" fill-opacity="0.85"/>
<circle cx="139.5" cy="497.1" r="1.25" fill="#C81818" fill-opacity="0.85"/>
<circle cx="126.5" cy="497.1" r="1.25" fill="#C81818" fill-opacity="0.85"/>
<circle cx="336.5" cy="497.1" r="1.25" fill="#C81818" fill-opacity="0.85"/>
<circle cx="323.5" cy="497.1" r="1.25" fill="#C81818" fill-opacity="0.85"/>
<circle cx="533.5" cy="497.1" r="1.25" fill="#C81818" fill-opacity="0.85"/>
<circle cx="520.5" cy="497.1" r="1.25" fill="#C81818" fill-opacity="0.85"/>
<circle cx="731.5" cy="497.1" r="1.25" fill="#C81818" fill-opacity="0.85"/>
<circle cx="718.5" cy="497.1" r="1.25" fill="#C81818" fill-opacity="0.85"/>
<circle cx="139.5" cy="504.1" r="1.25" fill="#C81818" fill-opacity="0.85"/>
<circle cx="126.5" cy="504.1" r="1.25" fill="#C81818" fill-opacity="0.85"/>
<circle cx="336.5" cy="504.1" r="1.25" fill="#C81818" fill-opacity="0.85"/>
<circle cx="323.5" cy="504.1" r="1.25" fill="#C81818" fill-opacity="0.85"/>
<circle cx="533.5" cy="504.1" r="1.25" fill="#C81818" fill-opacity="0.85"/>
<circle cx="520.5" cy="504.1" r="1.25" fill="#C81818" fill-opacity="0.85"/>
<circle cx="731.5" cy="504.1" r="1.25" fill="#C81818" fill-opacity="0.85"/>
<circle cx="718.5" cy="504.1" r="1.25" fill="#C81818" fill-opacity="0.85"/>
<circle cx="139.5" cy="511.1" r="1.25" fill="#C81818" fill-opacity="0.85"/>
<circle cx="126.5" cy="511.1" r="1.25" fill="#C81818" fill-opacity="0.85"/>
<circle cx="336.5" cy="511.1" r="1.25" fill="#C81818" fill-opacity="0.85"/>
<circle cx="323.5" cy="511.1" r="1.25" fill="#C81818" fill-opacity="0.85"/>
<circle cx="533.5" cy="511.1" r="1.25" fill="#C81818" fill-opacity="0.85"/>
<circle cx="520.5" cy="511.1" r="1.25" fill="#C81818" fill-opacity="0.85"/>
<circle cx="731.5" cy="511.1" r="1.25" fill="#C81818" fill-opacity="0.85"/>
<circle cx="718.5" cy="511.1" r="1.25" fill="#C81818" fill-opacity="0.85"/>
<circle cx="139.5" cy="518.0" r="1.25" fill="#C81818" fill-opacity="0.85"/>
<circle cx="126.5" cy="518.0" r="1.25" fill="#C81818" fill-opacity="0.85"/>
<circle cx="336.5" cy="518.0" r="1.25" fill="#C81818" fill-opacity="0.85"/>
<circle cx="323.5" cy="518.0" r="1.25" fill="#C81818" fill-opacity="0.85"/>
<circle cx="533.5" cy="518.0" r="1.25" fill="#C81818" fill-opacity="0.85"/>
<circle cx="520.5" cy="518.0" r="1.25" fill="#C81818" fill-opacity="0.85"/>
<circle cx="731.5" cy="518.0" r="1.25" fill="#C81818" fill-opacity="0.85"/>
<circle cx="718.5" cy="518.0" r="1.25" fill="#C81818" fill-opacity="0.85"/>
<circle cx="139.5" cy="525.0" r="1.25" fill="#C81818" fill-opacity="0.85"/>
<circle cx="126.5" cy="525.0" r="1.25" fill="#C81818" fill-opacity="0.85"/>
<circle cx="336.5" cy="525.0" r="1.25" fill="#C81818" fill-opacity="0.85"/>
<circle cx="323.5" cy="525.0" r="1.25" fill="#C81818" fill-opacity="0.85"/>
<circle cx="533.5" cy="525.0" r="1.25" fill="#C81818" fill-opacity="0.85"/>
<circle cx="520.5" cy="525.0" r="1.25" fill="#C81818" fill-opacity="0.85"/>
<circle cx="731.5" cy="525.0" r="1.25" fill="#C81818" fill-opacity="0.85"/>
<circle cx="718.5" cy="525.0" r="1.25" fill="#C81818" fill-opacity="0.85"/>
<circle cx="139.5" cy="532.0" r="1.25" fill="#C81818" fill-opacity="0.85"/>
<circle cx="126.5" cy="532.0" r="1.25" fill="#C81818" fill-opacity="0.85"/>
<circle cx="336.5" cy="532.0" r="1.25" fill="#C81818" fill-opacity="0.85"/>
<circle cx="323.5" cy="532.0" r="1.25" fill="#C81818" fill-opacity="0.85"/>
<circle cx="533.5" cy="532.0" r="1.25" fill="#C81818" fill-opacity="0.85"/>
<circle cx="520.5" cy="532.0" r="1.25" fill="#C81818" fill-opacity="0.85"/>
<circle cx="731.5" cy="532.0" r="1.25" fill="#C81818" fill-opacity="0.85"/>
<circle cx="718.5" cy="532.0" r="1.25" fill="#C81818" fill-opacity="0.85"/>
<circle cx="124.5" cy="402.5" r="1.25" fill="#C81818" fill-opacity="0.85"/>
<circle cx="124.5" cy="536.5" r="1.25" fill="#C81818" fill-opacity="0.85"/>
<circle cx="128.0" cy="402.5" r="1.25" fill="#C81818" fill-opacity="0.85"/>
<circle cx="128.0" cy="536.5" r="1.25" fill="#C81818" fill-opacity="0.85"/>
<circle cx="133.0" cy="402.5" r="1.25" fill="#C81818" fill-opacity="0.85"/>
<circle cx="133.0" cy="536.5" r="1.25" fill="#C81818" fill-opacity="0.85"/>
<circle cx="138.0" cy="402.5" r="1.25" fill="#C81818" fill-opacity="0.85"/>
<circle cx="138.0" cy="536.5" r="1.25" fill="#C81818" fill-opacity="0.85"/>
<circle cx="141.0" cy="402.5" r="1.25" fill="#C81818" fill-opacity="0.85"/>
<circle cx="141.0" cy="536.5" r="1.25" fill="#C81818" fill-opacity="0.85"/>
<circle cx="321.5" cy="402.5" r="1.25" fill="#C81818" fill-opacity="0.85"/>
<circle cx="321.5" cy="536.5" r="1.25" fill="#C81818" fill-opacity="0.85"/>
<circle cx="325.0" cy="402.5" r="1.25" fill="#C81818" fill-opacity="0.85"/>
<circle cx="325.0" cy="536.5" r="1.25" fill="#C81818" fill-opacity="0.85"/>
<circle cx="330.0" cy="402.5" r="1.25" fill="#C81818" fill-opacity="0.85"/>
<circle cx="330.0" cy="536.5" r="1.25" fill="#C81818" fill-opacity="0.85"/>
<circle cx="335.0" cy="402.5" r="1.25" fill="#C81818" fill-opacity="0.85"/>
<circle cx="335.0" cy="536.5" r="1.25" fill="#C81818" fill-opacity="0.85"/>
<circle cx="338.0" cy="402.5" r="1.25" fill="#C81818" fill-opacity="0.85"/>
<circle cx="338.0" cy="536.5" r="1.25" fill="#C81818" fill-opacity="0.85"/>
<circle cx="518.5" cy="402.5" r="1.25" fill="#C81818" fill-opacity="0.85"/>
<circle cx="518.5" cy="536.5" r="1.25" fill="#C81818" fill-opacity="0.85"/>
<circle cx="522.0" cy="402.5" r="1.25" fill="#C81818" fill-opacity="0.85"/>
<circle cx="522.0" cy="536.5" r="1.25" fill="#C81818" fill-opacity="0.85"/>
<circle cx="527.0" cy="402.5" r="1.25" fill="#C81818" fill-opacity="0.85"/>
<circle cx="527.0" cy="536.5" r="1.25" fill="#C81818" fill-opacity="0.85"/>
<circle cx="532.0" cy="402.5" r="1.25" fill="#C81818" fill-opacity="0.85"/>
<circle cx="532.0" cy="536.5" r="1.25" fill="#C81818" fill-opacity="0.85"/>
<circle cx="535.0" cy="402.5" r="1.25" fill="#C81818" fill-opacity="0.85"/>
<circle cx="535.0" cy="536.5" r="1.25" fill="#C81818" fill-opacity="0.85"/>
<circle cx="716.5" cy="402.5" r="1.25" fill="#C81818" fill-opacity="0.85"/>
<circle cx="716.5" cy="536.5" r="1.25" fill="#C81818" fill-opacity="0.85"/>
<circle cx="720.0" cy="402.5" r="1.25" fill="#C81818" fill-opacity="0.85"/>
<circle cx="720.0" cy="536.5" r="1.25" fill="#C81818" fill-opacity="0.85"/>
<circle cx="725.0" cy="402.5" r="1.25" fill="#C81818" fill-opacity="0.85"/>
<circle cx="725.0" cy="536.5" r="1.25" fill="#C81818" fill-opacity="0.85"/>
<circle cx="730.0" cy="402.5" r="1.25" fill="#C81818" fill-opacity="0.85"/>
<circle cx="730.0" cy="536.5" r="1.25" fill="#C81818" fill-opacity="0.85"/>
<circle cx="733.0" cy="402.5" r="1.25" fill="#C81818" fill-opacity="0.85"/>
<circle cx="733.0" cy="536.5" r="1.25" fill="#C81818" fill-opacity="0.85"/>
<circle cx="124.0" cy="301.5" r="1.25" fill="#C81818" fill-opacity="0.85"/>
<circle cx="133.0" cy="301.5" r="1.25" fill="#C81818" fill-opacity="0.85"/>
<circle cx="141.5" cy="301.5" r="1.25" fill="#C81818" fill-opacity="0.85"/>
<circle cx="125.5" cy="308.5" r="1.25" fill="#C81818" fill-opacity="0.85"/>
<circle cx="140.0" cy="308.5" r="1.25" fill="#C81818" fill-opacity="0.85"/>
<circle cx="124.0" cy="315.5" r="1.25" fill="#C81818" fill-opacity="0.85"/>
<circle cx="133.0" cy="315.5" r="1.25" fill="#C81818" fill-opacity="0.85"/>
<circle cx="141.5" cy="315.5" r="1.25" fill="#C81818" fill-opacity="0.85"/>
<circle cx="124.0" cy="622.0" r="1.25" fill="#C81818" fill-opacity="0.85"/>
<circle cx="133.0" cy="622.0" r="1.25" fill="#C81818" fill-opacity="0.85"/>
<circle cx="141.5" cy="622.0" r="1.25" fill="#C81818" fill-opacity="0.85"/>
<circle cx="124.0" cy="636.0" r="1.25" fill="#C81818" fill-opacity="0.85"/>
<circle cx="133.0" cy="636.0" r="1.25" fill="#C81818" fill-opacity="0.85"/>
<circle cx="141.5" cy="636.0" r="1.25" fill="#C81818" fill-opacity="0.85"/>
<circle cx="125.5" cy="358.0" r="1.25" fill="#C81818" fill-opacity="0.85"/>
<circle cx="321.0" cy="360.5" r="1.25" fill="#C81818" fill-opacity="0.85"/>
<circle cx="330.0" cy="360.5" r="1.25" fill="#C81818" fill-opacity="0.85"/>
<circle cx="338.5" cy="360.5" r="1.25" fill="#C81818" fill-opacity="0.85"/>
<circle cx="322.5" cy="367.5" r="1.25" fill="#C81818" fill-opacity="0.85"/>
<circle cx="337.0" cy="367.5" r="1.25" fill="#C81818" fill-opacity="0.85"/>
<circle cx="321.0" cy="374.5" r="1.25" fill="#C81818" fill-opacity="0.85"/>
<circle cx="330.0" cy="374.5" r="1.25" fill="#C81818" fill-opacity="0.85"/>
<circle cx="338.5" cy="374.5" r="1.25" fill="#C81818" fill-opacity="0.85"/>
<circle cx="321.0" cy="563.0" r="1.25" fill="#C81818" fill-opacity="0.85"/>
<circle cx="330.0" cy="563.0" r="1.25" fill="#C81818" fill-opacity="0.85"/>
<circle cx="338.5" cy="563.0" r="1.25" fill="#C81818" fill-opacity="0.85"/>
<circle cx="321.0" cy="577.0" r="1.25" fill="#C81818" fill-opacity="0.85"/>
<circle cx="330.0" cy="577.0" r="1.25" fill="#C81818" fill-opacity="0.85"/>
<circle cx="338.5" cy="577.0" r="1.25" fill="#C81818" fill-opacity="0.85"/>
<circle cx="322.5" cy="388.0" r="1.25" fill="#C81818" fill-opacity="0.85"/>
<circle cx="518.0" cy="360.5" r="1.25" fill="#C81818" fill-opacity="0.85"/>
<circle cx="527.0" cy="360.5" r="1.25" fill="#C81818" fill-opacity="0.85"/>
<circle cx="535.5" cy="360.5" r="1.25" fill="#C81818" fill-opacity="0.85"/>
<circle cx="519.5" cy="367.5" r="1.25" fill="#C81818" fill-opacity="0.85"/>
<circle cx="534.0" cy="367.5" r="1.25" fill="#C81818" fill-opacity="0.85"/>
<circle cx="518.0" cy="374.5" r="1.25" fill="#C81818" fill-opacity="0.85"/>
<circle cx="527.0" cy="374.5" r="1.25" fill="#C81818" fill-opacity="0.85"/>
<circle cx="535.5" cy="374.5" r="1.25" fill="#C81818" fill-opacity="0.85"/>
<circle cx="518.0" cy="563.0" r="1.25" fill="#C81818" fill-opacity="0.85"/>
<circle cx="527.0" cy="563.0" r="1.25" fill="#C81818" fill-opacity="0.85"/>
<circle cx="535.5" cy="563.0" r="1.25" fill="#C81818" fill-opacity="0.85"/>
<circle cx="518.0" cy="577.0" r="1.25" fill="#C81818" fill-opacity="0.85"/>
<circle cx="527.0" cy="577.0" r="1.25" fill="#C81818" fill-opacity="0.85"/>
<circle cx="535.5" cy="577.0" r="1.25" fill="#C81818" fill-opacity="0.85"/>
<circle cx="519.5" cy="388.0" r="1.25" fill="#C81818" fill-opacity="0.85"/>
<circle cx="716.0" cy="301.5" r="1.25" fill="#C81818" fill-opacity="0.85"/>
<circle cx="725.0" cy="301.5" r="1.25" fill="#C81818" fill-opacity="0.85"/>
<circle cx="733.5" cy="301.5" r="1.25" fill="#C81818" fill-opacity="0.85"/>
<circle cx="717.5" cy="308.5" r="1.25" fill="#C81818" fill-opacity="0.85"/>
<circle cx="732.0" cy="308.5" r="1.25" fill="#C81818" fill-opacity="0.85"/>
<circle cx="716.0" cy="315.5" r="1.25" fill="#C81818" fill-opacity="0.85"/>
<circle cx="725.0" cy="315.5" r="1.25" fill="#C81818" fill-opacity="0.85"/>
<circle cx="733.5" cy="315.5" r="1.25" fill="#C81818" fill-opacity="0.85"/>
<circle cx="716.0" cy="622.0" r="1.25" fill="#C81818" fill-opacity="0.85"/>
<circle cx="725.0" cy="622.0" r="1.25" fill="#C81818" fill-opacity="0.85"/>
<circle cx="733.5" cy="622.0" r="1.25" fill="#C81818" fill-opacity="0.85"/>
<circle cx="716.0" cy="636.0" r="1.25" fill="#C81818" fill-opacity="0.85"/>
<circle cx="725.0" cy="636.0" r="1.25" fill="#C81818" fill-opacity="0.85"/>
<circle cx="733.5" cy="636.0" r="1.25" fill="#C81818" fill-opacity="0.85"/>
<circle cx="717.5" cy="358.0" r="1.25" fill="#C81818" fill-opacity="0.85"/>
<rect x="0" y="467" width="122" height="4.5" fill="#FFFFFF"/>
<rect x="0" y="467" width="122" height="1" fill="#A8A8A8"/>
<rect x="0" y="470.5" width="122" height="1" fill="#B0B0B0"/>
<rect x="736" y="467" width="157" height="4.5" fill="#FFFFFF"/>
<rect x="736" y="467" width="157" height="1" fill="#A8A8A8"/>
<rect x="736" y="470.5" width="157" height="1" fill="#B0B0B0"/>
<rect x="122" y="468" width="22" height="2" fill="#E0E4F0"/>
<rect x="319" y="468" width="22" height="2" fill="#E0E4F0"/>
<rect x="516" y="468" width="22" height="2" fill="#E0E4F0"/>
<rect x="714" y="468" width="22" height="2" fill="#E0E4F0"/>
<rect x="117.8" y="424.6" width="8.4" height="18.7" fill="#fff" stroke="#000" stroke-width="1.1"/>
<rect x="117.8" y="493.6" width="8.4" height="18.7" fill="#fff" stroke="#000" stroke-width="1.1"/>
<rect x="730.9" y="493.8" width="8.4" height="18.7" fill="#fff" stroke="#000" stroke-width="1.1"/>
<rect x="730.9" y="424.8" width="8.4" height="18.7" fill="#fff" stroke="#000" stroke-width="1.1"/>
<path d="M119.2 431.8L122.2 428.4V440.8" fill="none" stroke="#D82020" stroke-width="2.1"/>
<path d="M118.9 499.6Q119.5 497.4 121.8 497.4Q124.7 497.4 124.7 500.3Q124.7 502.1 122.5 504.2L119 508.4H125.2" fill="none" stroke="#D82020" stroke-width="1.5"/>
<path d="M731.8 499.2Q732.8 497.5 734.9 497.5Q737.6 497.5 737.6 500Q737.6 502.6 734.4 502.9Q737.9 503.2 737.9 506.1Q737.9 509.2 734.7 509.2Q732.4 509.2 731.5 507.2" fill="none" stroke="#D82020" stroke-width="1.5"/>
<path d="M736.2 440.8V428.6L731 436.6H738.3" fill="none" stroke="#D82020" stroke-width="1.7"/>
</svg>
<div class="a" style="left:0;top:88px;width:2px;height:743px;background:#9A9C90"></div>
<div class="a" style="left:0;top:87px;width:893px;height:1.5px;background:#858478"></div>
<div class="a" style="left:896px;top:92px;width:141px;height:167px;background:#fff;border-top:2px solid #8E8B7E;border-left:2px solid #8E8B7E;border-right:1px solid #F8F7F2;border-bottom:2px solid #F8F7F2"></div>
<div class="t" style="right:131px;top:96.0px;font-weight:bold;letter-spacing:0.25px">x:</div>
<div class="t" style="left:935px;top:96.0px;letter-spacing:-0.35px;color:#111">0.6</div>
<div class="t" style="right:131px;top:112.5px;font-weight:bold;letter-spacing:0.25px">y:</div>
<div class="t" style="left:935px;top:112.5px;letter-spacing:-0.35px;color:#111">14.2</div>
<div class="t" style="right:131px;top:129.0px;font-weight:bold;letter-spacing:0.25px">z:</div>
<div class="t" style="left:935px;top:129.0px;letter-spacing:-0.35px;color:#111">0.254</div>
<div class="t" style="right:131px;top:145.5px;font-weight:bold;letter-spacing:0.25px">dx:</div>
<div class="t" style="left:935px;top:145.5px;letter-spacing:-0.35px;color:#111">0.6</div>
<div class="t" style="right:131px;top:162.0px;font-weight:bold;letter-spacing:0.25px">dy:</div>
<div class="t" style="left:935px;top:162.0px;letter-spacing:-0.35px;color:#111">14.2</div>
<div class="t" style="right:131px;top:178.5px;font-weight:bold;letter-spacing:0.25px">dz:</div>
<div class="t" style="left:935px;top:178.5px;letter-spacing:-0.35px;color:#111">0.254</div>
<div class="t" style="right:131px;top:195.0px;font-weight:bold;letter-spacing:0.25px">dRho:</div>
<div class="t" style="left:935px;top:195.0px;letter-spacing:-0.35px;color:#111">14.2126704</div>
<div class="t" style="right:131px;top:211.5px;font-weight:bold;letter-spacing:0.25px">phi:</div>
<div class="t" style="left:935px;top:211.5px;letter-spacing:-0.35px;color:#111">87.58049078</div>
<div class="t" style="right:131px;top:228.0px;font-weight:bold;letter-spacing:0.25px">dr:</div>
<div class="t" style="left:935px;top:228.0px;letter-spacing:-0.35px;color:#111">14.21493989</div>
<div class="t" style="right:131px;top:244.5px;font-weight:bold;letter-spacing:0.25px">theta:</div>
<div class="t" style="left:935px;top:244.5px;letter-spacing:-0.35px;color:#111">88.97615448</div>
<div class="a" style="left:896px;top:265px;width:141px;height:481px;background:#fff;border-top:2px solid #8E8B7E;border-left:2px solid #8E8B7E"></div>
<div class="a" style="left:898px;top:267px;width:141px;height:15px;background:#EBEADB;border-bottom:1px solid #D6D3C4"></div>
<div class="a" style="left:920px;top:268px;width:1px;height:14px;background:#D0CDBE"></div>
<div class="a" style="left:936px;top:268px;width:1px;height:14px;background:#D0CDBE"></div>
<div class="a" style="left:949px;top:268px;width:1px;height:14px;background:#D0CDBE"></div>
<div class="a" style="left:999px;top:268px;width:1px;height:14px;background:#D0CDBE"></div>
<div class="a" style="left:905px;top:269px;width:8px;height:8px;background:#fff;border:1px solid #9a9a9a"></div>
<div class="t" style="left:925px;top:270px;font-style:italic">t</div>
<div class="t" style="left:971px;top:269px">Z</div>
<div class="a" style="left:898px;top:298px;width:141px;height:1px;background:#ECEBE3"></div>
<div class="a" style="left:898px;top:312px;width:141px;height:1px;background:#ECEBE3"></div>
<div class="a" style="left:898px;top:326px;width:141px;height:1px;background:#ECEBE3"></div>
<div class="a" style="left:898px;top:340px;width:141px;height:1px;background:#ECEBE3"></div>
<div class="a" style="left:898px;top:354px;width:141px;height:1px;background:#ECEBE3"></div>
<div class="a" style="left:898px;top:368px;width:141px;height:1px;background:#ECEBE3"></div>
<div class="a" style="left:898px;top:382px;width:141px;height:1px;background:#ECEBE3"></div>
<div class="a" style="left:898px;top:396px;width:141px;height:1px;background:#ECEBE3"></div>
<div class="a" style="left:898px;top:411px;width:141px;height:1px;background:#ECEBE3"></div>
<div class="a" style="left:898px;top:425px;width:141px;height:1px;background:#ECEBE3"></div>
<div class="a" style="left:898px;top:439px;width:141px;height:1px;background:#ECEBE3"></div>
<div class="a" style="left:898px;top:453px;width:141px;height:1px;background:#ECEBE3"></div>
<div class="a" style="left:898px;top:467px;width:141px;height:1px;background:#ECEBE3"></div>
<div class="a" style="left:898px;top:481px;width:141px;height:1px;background:#ECEBE3"></div>
<div class="a" style="left:898px;top:495px;width:141px;height:1px;background:#ECEBE3"></div>
<div class="a" style="left:898px;top:509px;width:141px;height:1px;background:#ECEBE3"></div>
<div class="a" style="left:898px;top:523px;width:141px;height:1px;background:#ECEBE3"></div>
<div class="a" style="left:898px;top:538px;width:141px;height:1px;background:#ECEBE3"></div>
<div class="a" style="left:898px;top:552px;width:141px;height:1px;background:#ECEBE3"></div>
<div class="a" style="left:898px;top:566px;width:141px;height:1px;background:#ECEBE3"></div>
<div class="a" style="left:898px;top:580px;width:141px;height:1px;background:#ECEBE3"></div>
<div class="a" style="left:898px;top:594px;width:141px;height:1px;background:#ECEBE3"></div>
<div class="a" style="left:898px;top:608px;width:141px;height:1px;background:#ECEBE3"></div>
<div class="a" style="left:898px;top:622px;width:141px;height:1px;background:#ECEBE3"></div>
<div class="a" style="left:898px;top:636px;width:141px;height:1px;background:#ECEBE3"></div>
<div class="a" style="left:898px;top:650px;width:141px;height:1px;background:#ECEBE3"></div>
<div class="a" style="left:898px;top:665px;width:141px;height:1px;background:#ECEBE3"></div>
<div class="a" style="left:898px;top:679px;width:141px;height:1px;background:#ECEBE3"></div>
<div class="a" style="left:898px;top:693px;width:141px;height:1px;background:#ECEBE3"></div>
<div class="a" style="left:898px;top:707px;width:141px;height:1px;background:#ECEBE3"></div>
<div class="a" style="left:898px;top:721px;width:141px;height:1px;background:#ECEBE3"></div>
<div class="a" style="left:898px;top:735px;width:141px;height:1px;background:#ECEBE3"></div>
<div class="a" style="left:921px;top:283px;width:1px;height:465px;background:#ECEBE3"></div>
<div class="a" style="left:937px;top:283px;width:1px;height:465px;background:#ECEBE3"></div>
<div class="a" style="left:950px;top:283px;width:1px;height:465px;background:#ECEBE3"></div>
<div class="a" style="left:1000px;top:283px;width:1px;height:465px;background:#ECEBE3"></div>
<div class="a" style="left:905px;top:286.0px;width:8px;height:8px;background:#fff;border:1px solid #9a9a9a"></div>
<svg class="a" style="left:905px;top:286.0px" width="10" height="10"><path d="M2 5L4 7.3L8 2.6" stroke="#000" stroke-width="1.7" fill="none"/></svg>
<div class="a" style="left:922px;top:284.0px;width:15px;height:14px;background:#316AC5"></div>
<div class="a" style="left:951px;top:284.0px;width:49px;height:14px;background:#316AC5"></div>
<div class="a" style="left:938px;top:284.0px;width:12px;height:14px;background:#000080"></div>
<div class="t" style="left:926px;top:286.0px;color:#fff">2</div>
<div class="a" style="left:950px;top:286.0px;width:50px;overflow:hidden;white-space:nowrap;line-height:1;color:#fff;letter-spacing:-0.2px">0.254000</div>
<div class="a" style="left:905px;top:300.1px;width:8px;height:8px;background:#fff;border:1px solid #9a9a9a"></div>
<svg class="a" style="left:905px;top:300.1px" width="10" height="10"><path d="M2 5L4 7.3L8 2.6" stroke="#000" stroke-width="1.7" fill="none"/></svg>
<div class="a" style="left:938px;top:298.1px;width:12px;height:14px;background:#008000"></div>
<div class="a" style="left:938px;top:304.6px;width:12px;height:1px;background:#50A050"></div>
<div class="t" style="left:926px;top:300.1px;color:#111">1</div>
<div class="a" style="left:950px;top:300.1px;width:50px;overflow:hidden;white-space:nowrap;line-height:1;color:#111;letter-spacing:-0.2px">0.000000</div>
<div class="a" style="left:905px;top:314.2px;width:8px;height:8px;background:#fff;border:1px solid #9a9a9a"></div>
<div class="a" style="left:938px;top:312.2px;width:12px;height:14px;background:#800000"></div>
<div class="t" style="left:926px;top:314.2px;color:#111">A</div>
<div class="a" style="left:950px;top:314.2px;width:50px;overflow:hidden;white-space:nowrap;line-height:1;color:#111;letter-spacing:-0.2px">3D Polygo</div>
<div class="a" style="left:896px;top:758px;width:143px;height:68px;border:1px solid #6E6C62;border-right-width:1.5px;border-bottom-width:1.5px"></div>
<div class="a" style="left:901px;top:766px;width:9px;height:9px;background:#fff;border-top:2px solid #888;border-left:2px solid #888"></div>
<svg class="a" style="left:902px;top:767px" width="10" height="10"><path d="M1.5 4.5L3.8 7L8 2" stroke="#000" stroke-width="1.8" fill="none"/></svg>
<div class="t" style="left:918px;top:767px">List All Layers</div>
<div class="a" style="left:900px;top:784px;width:126px;height:21px;background:#ECE9D8;border-top:1px solid #fff;border-left:1px solid #fff;border-right:2px solid #8E8B7E;border-bottom:2px solid #8E8B7E"></div>
<div class="t" style="left:931px;top:790px">Insert a Layer</div>
<svg class="a" style="left:1040px;top:88px" width="23" height="412" viewBox="1040 88 23 412">
<rect x="1043" y="91" width="20" height="1" fill="#fff"/>
<rect x="1045" y="187" width="15" height="1" fill="#C5C2B2"/><rect x="1045" y="188" width="15" height="1" fill="#fff"/>
<rect x="1045" y="247" width="15" height="1" fill="#C5C2B2"/><rect x="1045" y="248" width="15" height="1" fill="#fff"/>
<rect x="1045" y="289" width="15" height="1" fill="#C5C2B2"/><rect x="1045" y="290" width="15" height="1" fill="#fff"/>
<rect x="1045" y="313" width="15" height="1" fill="#C5C2B2"/><rect x="1045" y="314" width="15" height="1" fill="#fff"/>
<rect x="1045" y="353" width="15" height="1" fill="#C5C2B2"/><rect x="1045" y="354" width="15" height="1" fill="#fff"/>
<rect x="1045" y="395" width="15" height="1" fill="#C5C2B2"/><rect x="1045" y="396" width="15" height="1" fill="#fff"/>
<rect x="1045" y="455" width="15" height="1" fill="#C5C2B2"/><rect x="1045" y="456" width="15" height="1" fill="#fff"/>
<path d="M1046 100H1055L1060 106H1051Z" fill="#10E010" stroke="#0A9A0A" stroke-width="0.6"/>
<path d="M1046 118H1060V122.5H1055.3V127.8H1050.5V122.5H1046Z" fill="#10E010" stroke="#0A9A0A" stroke-width="0.6"/>
<path d="M1046.5 133.5L1053 139L1059.5 133.5M1053 139V145.5" stroke="#10E010" stroke-width="4" fill="none"/>
<path d="M1046 156.5H1053V154H1060V162H1053V160H1046Z" fill="#10E010" stroke="#0A9A0A" stroke-width="0.6"/>
<path d="M1046 172H1055L1058.5 175.5V183H1053.5V176.5H1046Z" fill="#10E010" stroke="#0A9A0A" stroke-width="0.6"/>
<ellipse cx="1053" cy="199.6" rx="7" ry="4" fill="#10E010" stroke="#0A9A0A" stroke-width="0.6"/>
<ellipse cx="1053" cy="218.3" rx="5.5" ry="2.8" fill="none" stroke="#10E010" stroke-width="2"/>
<path d="M1047.5 238.5Q1053 231 1058.5 238.5" fill="none" stroke="#10E010" stroke-width="2.2"/>
<path d="M1049 253.5H1056Q1058.5 258.3 1056 263H1049Z" fill="#10E010" stroke="#0A9A0A" stroke-width="0.8"/><ellipse cx="1049.5" cy="258.3" rx="2.8" ry="4.8" fill="#0a8a2a" stroke="#064a16" stroke-width="0.8"/>
<path d="M1048 274L1051 272.5L1059.5 280L1057 284L1049 279Z" fill="#10E010" stroke="#0A9A0A" stroke-width="0.8"/><ellipse cx="1049.5" cy="276" rx="3" ry="2.6" fill="#0a8a2a" stroke="#064a16" stroke-width="0.8"/><path d="M1055 279.5L1058.5 283.5" stroke="#0a6a1a" stroke-width="2"/>
<circle cx="1053" cy="301" r="5.2" fill="#10E010" stroke="#0a7a1a" stroke-width="1"/><path d="M1051.5 301H1054.5M1053 299.5V302.5" stroke="#c0ffc0" stroke-width="0.8"/>
<path d="M1050 320L1056 319M1050 323L1056 322M1050 326L1056 325M1050 329L1056 328" stroke="#1A1A80" stroke-width="1.4"/><path d="M1050 320V329M1056 319V328" stroke="#1A1A80" stroke-width="0.8" stroke-opacity="0.7"/>
<path d="M1055 336.5Q1048 337.5 1047 342Q1049 347.5 1054 347Q1058.5 345.5 1057.5 342.5Q1054 340.5 1050.5 342.5Q1052 345 1055.5 344" fill="none" stroke="#1A1A80" stroke-width="1"/>
<rect x="1047" y="360" width="11.5" height="11" fill="#1A1A80"/><circle cx="1052.8" cy="365.5" r="4" fill="#fff"/>
<rect x="1046" y="378.5" width="13.5" height="11" fill="#1A1A80"/><circle cx="1052.8" cy="384" r="3.8" fill="#fff"/>
<rect x="1048.5" y="401.5" width="8" height="9.5" fill="#fff" stroke="#1A1A80" stroke-width="1.2"/><path d="M1050.5 409V403.5H1054.5V407.5H1052.5" fill="none" stroke="#1A1A80" stroke-width="1"/><path d="M1045.5 406.5H1048.5M1056.5 409H1059" stroke="#1A1A80"/>
<circle cx="1052.5" cy="425.7" r="4.8" fill="#fff" stroke="#1A1A80" stroke-width="1.2"/><circle cx="1052.5" cy="425.7" r="2.3" fill="none" stroke="#1A1A80" stroke-width="1"/><path d="M1045.5 425.7H1052.5M1057 425.7H1059.5" stroke="#1A1A80"/>
<circle cx="1052.5" cy="444.3" r="5" fill="#fff" stroke="#1A1A80" stroke-width="1.2"/><circle cx="1052.5" cy="444.3" r="2.6" fill="none" stroke="#1A1A80" stroke-width="1"/>
<rect x="1048.5" y="461" width="9" height="12" rx="3" fill="#1A1A80"/><path d="M1050.6 471.5V463.5H1053V470.5H1055.4V462.5" fill="none" stroke="#C8C8F0" stroke-width="0.9"/>
<rect x="1046" y="483" width="14.5" height="7.5" fill="#20E8F8"/><path d="M1048.5 482H1058L1060 484" stroke="#10A040" stroke-width="1" fill="none"/><path d="M1049 490.5L1050.5 483H1055.5L1057 490.5Z" fill="#0000E0"/>
</svg>
<div class="a" style="left:1042px;top:88px;width:1px;height:742px;background:#ACA899"></div>
<div class="a" style="left:0;top:831px;width:1063px;height:17px;background:#ECE9D8"></div>
<div class="t" style="left:1px;top:837px">For Help, press F1</div>
<div class="a" style="left:731px;top:834px;width:61px;height:14px;border-top:1px solid #ACA899;border-left:1px solid #ACA899"></div>
<div class="t" style="left:733px;top:837px">(mm)</div>
<div class="a" style="left:795px;top:834px;width:78px;height:14px;border-top:1px solid #ACA899;border-left:1px solid #ACA899"></div>
<div class="t" style="left:797px;top:837px">41.6765%</div>
<div class="a" style="left:877px;top:834px;width:78px;height:14px;border-top:1px solid #ACA899;border-left:1px solid #ACA899"></div>
<div class="t" style="left:879px;top:837px">R2_COPYPEN</div>
<div class="a" style="left:958px;top:834px;width:104px;height:14px;border-top:1px solid #ACA899;border-left:1px solid #ACA899"></div>
<div class="t" style="left:960px;top:837px">No Plane Wave Defin</div>
<div class="a" style="left:0;top:848px;width:1063px;height:2px;background:linear-gradient(#5A8EE0,#3A70D8)"></div>
</body></html>
